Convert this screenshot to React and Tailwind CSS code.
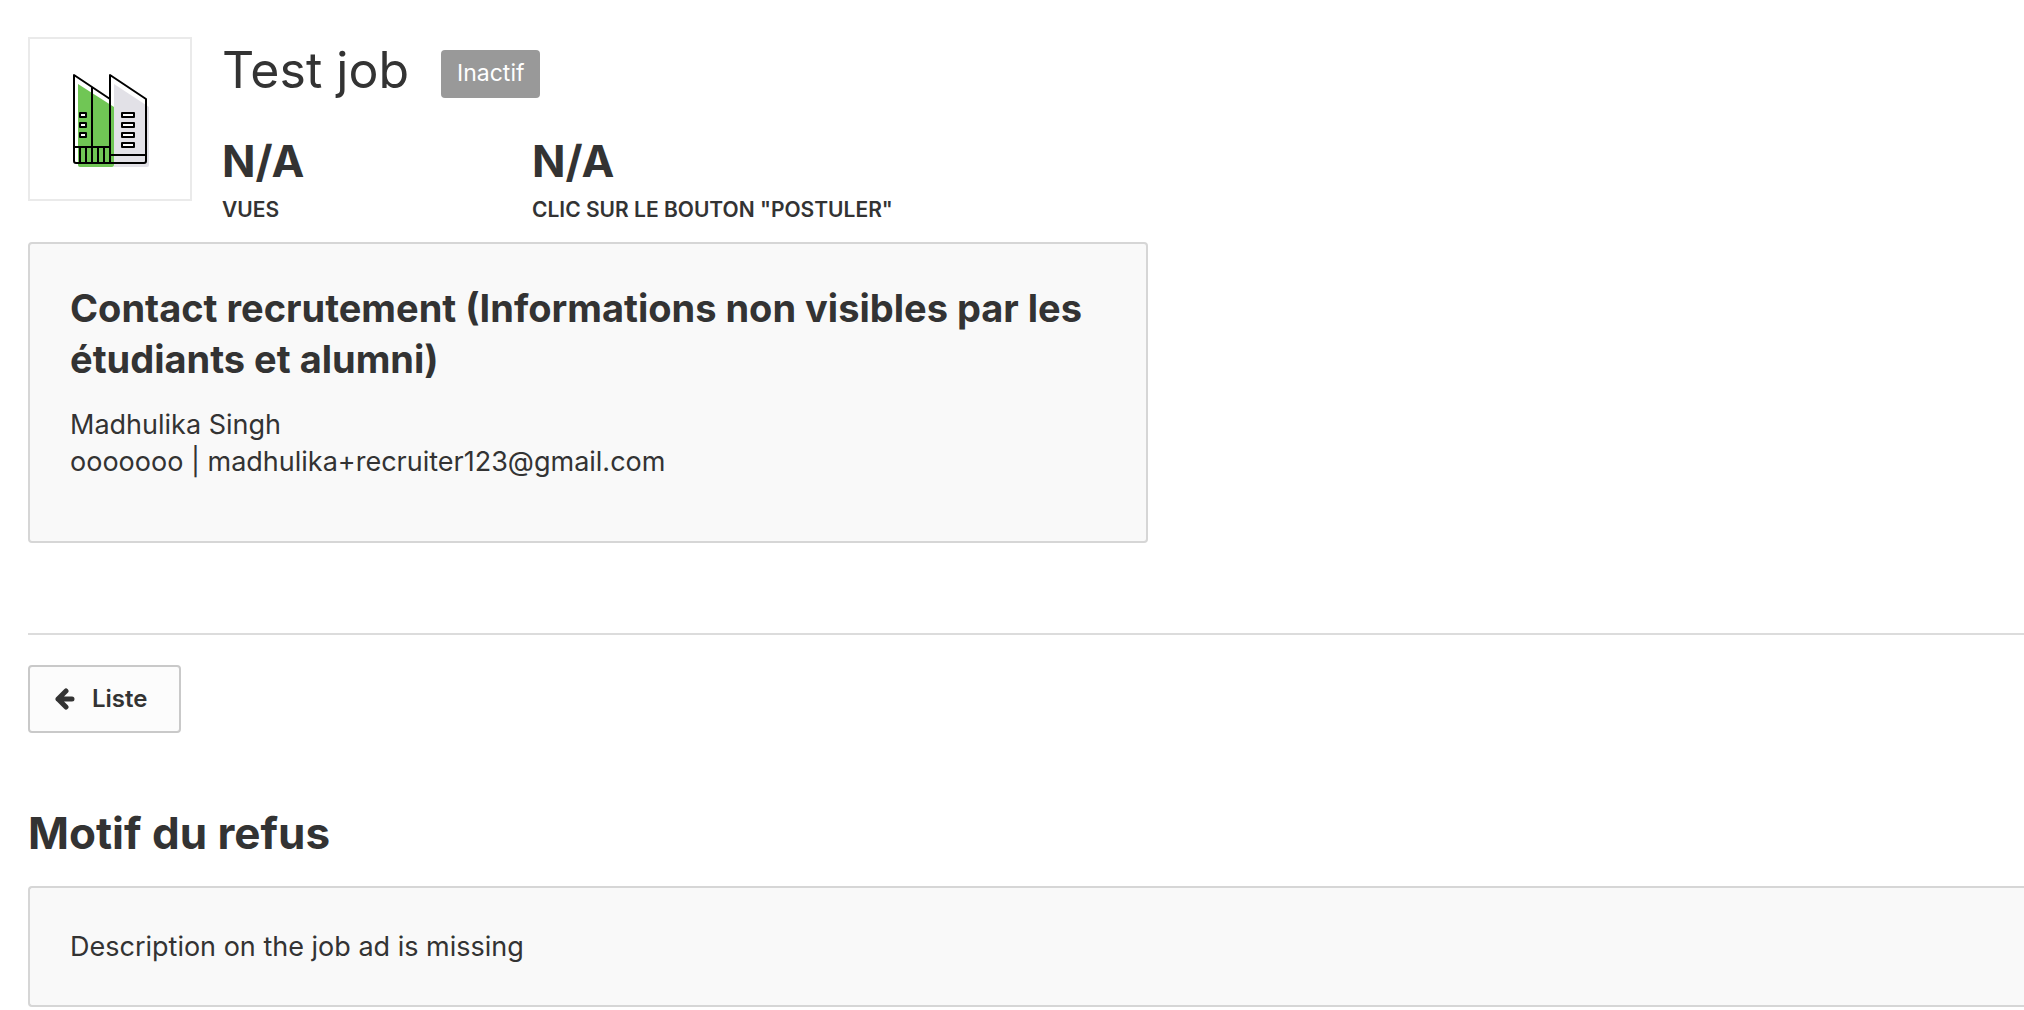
import React from "react";

const stats = [
  { id: "views", value: "N/A", label: "VUES" },
  { id: "clicks", value: "N/A", label: 'CLIC SUR LE BOUTON "POSTULER"' },
];

const CompanyLogo = () => (
  <svg viewBox="-3 -3 80 96" className="h-24 w-20" fill="none" aria-hidden="true">
    <path d="M41 10 L76 33 V91 Q76 93 74 93 H41 Z" fill="#e2e1e7" />
    <path d="M5 10 L41 33 V91 Q41 93 39 93 H7 Q5 93 5 91 Z" fill="#70c655" />
    <g stroke="#000" strokeWidth="2" strokeLinejoin="round">
      <path d="M37 25 L1 1 V87 Q1 89 3 89 H71 Q73 89 73 87 V25 L37 1 V89" />
      <path d="M19 13 V73 M1 73 H37 M37 81 H73" />
      <path d="M7 73 V89 M13 73 V89 M19 73 V89 M25 73 V89 M31 73 V89" />
      <g fill="#fff">
        <path d="M7 39 H13 V43 H7 Z M7 49 H13 V53 H7 Z M7 59 H13 V63 H7 Z" />
        <path d="M49 39 H61 V43 H49 Z M49 49 H61 V53 H49 Z M49 59 H61 V63 H49 Z M49 69 H61 V73 H49 Z" />
      </g>
    </g>
  </svg>
);

const ArrowIcon = () => (
  <svg viewBox="0 0 20 22" className="h-[22px] w-5" fill="none" aria-hidden="true">
    <path
      d="M11 3 L3 11 L11 19 M3 11 H17"
      stroke="currentColor"
      strokeWidth="5"
      strokeLinecap="round"
      strokeLinejoin="round"
    />
  </svg>
);

const JobHeader = () => (
  <header className="flex gap-[30px]">
    <div className="flex h-[164px] w-[164px] shrink-0 items-center justify-center border-2 border-[#eaeaea]">
      <CompanyLogo />
    </div>
    <div>
      <div className="flex items-center gap-8 pt-[9px]">
        <h1 className="pb-2 text-[50px] leading-[48px]">Test job</h1>
        <span className="rounded bg-[#999] px-4 pt-[3px] pb-[5px] text-[23px] leading-10 text-white">
          Inactif
        </span>
      </div>
      <dl className="flex pt-7">
        {stats.map((stat) => (
          <div key={stat.id} className="flex min-w-[310px] flex-col-reverse">
            <dt className="text-[21px] leading-9 font-semibold">{stat.label}</dt>
            <dd className="text-[44px] leading-[62px] font-bold">{stat.value}</dd>
          </div>
        ))}
      </dl>
    </div>
  </header>
);

const ContactCard = () => (
  <section className="mt-3.5 max-w-[1120px] rounded border-2 border-[#d6d6d6] bg-[#f9f9f9] px-10 pt-[39px] pb-[61px]">
    <h2 className="text-[38px] leading-[51px] font-bold">
      Contact recrutement (Informations non visibles par les étudiants et alumni)
    </h2>
    <p className="mt-[21px] text-[27px] leading-[37px]">
      Madhulika Singh
      <br />
      ooooooo | madhulika+recruiter123@gmail.com
    </p>
  </section>
);

const App = () => {
  return (
    <main className="overflow-x-hidden bg-white pt-[37px] pl-7 font-['Inter',sans-serif] text-[#333]">
      <JobHeader />
      <ContactCard />
      <hr className="mt-[90px] border-t-2 border-[#dcdcdc]" />
      <button
        type="button"
        className="mt-[30px] flex items-center gap-[17px] rounded border-2 border-[#c9c9c9] bg-[#fcfcfc] py-3 pr-8 pl-[25px] text-[24px] leading-10 font-semibold"
      >
        <ArrowIcon />
        Liste
      </button>
      <h2 className="mt-[68px] text-[44px] leading-[64px] font-bold">Motif du refus</h2>
      <section className="mt-[21px] rounded-l border-2 border-r-0 border-[#d6d6d6] bg-[#f9f9f9] p-10">
        <p className="text-[27px] leading-[37px]">Description on the job ad is missing</p>
      </section>
    </main>
  );
};

export default App;
